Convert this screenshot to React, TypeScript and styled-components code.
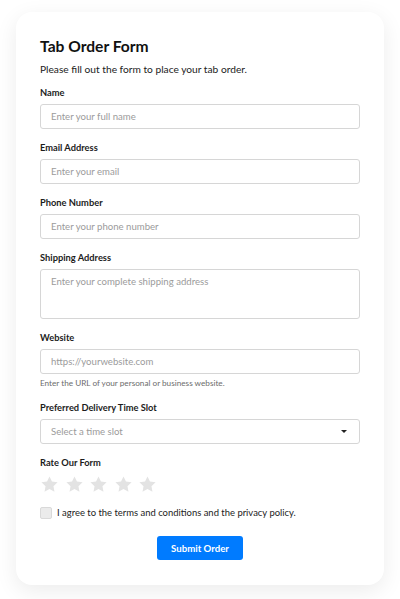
import React from 'react';
import styled, { createGlobalStyle } from 'styled-components';

const GlobalStyle = createGlobalStyle`
  * { box-sizing: border-box; }
  body {
    margin: 0;
    background: #ffffff;
    font-family: Lato, "Open Sans", sans-serif;
    color: #212529;
  }
`;

const Page = styled.div`
  padding: 12px 16px 14px;
`;

const Card = styled.form`
  display: flex;
  flex-direction: column;
  background: #ffffff;
  border-radius: 16px;
  padding: 24px 24px 25px;
  box-shadow: 0 6px 22px rgba(0, 0, 0, 0.08);
`;

const Title = styled.h1`
  margin: 0;
  font-size: 15.6px;
  line-height: 20px;
  font-weight: 700;
  color: #111111;
`;

const Subtitle = styled.p`
  margin: 5.5px 0 11.8px;
  font-size: 10.2px;
  line-height: 14px;
  color: #222222;
`;

const Field = styled.div`
  display: flex;
  flex-direction: column;
  margin-bottom: 13px;
`;

const Label = styled.label`
  font-size: 9.3px;
  line-height: 12px;
  font-weight: 700;
  color: #1c1c1c;
  margin-bottom: 5px;
`;

const inputBase = `
  width: 100%;
  border: 1px solid #d6d6d6;
  border-radius: 3px;
  background: #ffffff;
  font-family: Lato, "Open Sans", sans-serif;
  font-size: 9.6px;
  color: #333333;
  outline: none;
  &::placeholder { color: #9b9b9b; }
`;

const TextInput = styled.input`
  ${inputBase}
  height: 25px;
  padding: 0 10px;
`;

const TextArea = styled.textarea`
  ${inputBase}
  height: 50px;
  padding: 6px 10px;
  line-height: 12px;
  resize: none;
`;

const Help = styled.span`
  margin-top: 4px;
  font-size: 8.2px;
  line-height: 11px;
  color: #6c6c6c;
`;

const SelectBox = styled.div`
  ${inputBase}
  height: 25px;
  padding: 0 12px 0 10px;
  display: flex;
  align-items: center;
  justify-content: space-between;
  color: #9b9b9b;
`;

const Caret = styled.span`
  width: 0;
  height: 0;
  border-left: 3px solid transparent;
  border-right: 3px solid transparent;
  border-top: 3.5px solid #222222;
`;

const Stars = styled.div`
  display: flex;
  gap: 5.5px;
  margin-top: 1px;
`;

const Star = () => (
  <svg width="19" height="19" viewBox="0 0 24 24">
    <path
      d="M12 1.8l3.1 6.5 7.1.9-5.2 4.9 1.3 7.1L12 17.8l-6.3 3.4 1.3-7.1L1.8 9.2l7.1-.9z"
      fill="#e3e3e3"
    />
  </svg>
);

const CheckRow = styled.label`
  display: flex;
  align-items: center;
  gap: 5px;
  font-size: 9.45px;
  line-height: 12px;
  color: #222222;
`;

const Box = styled.span`
  width: 12px;
  height: 12px;
  border: 1px solid #d9d9d9;
  background: #ebebeb;
  border-radius: 2px;
`;

const Actions = styled.div`
  display: flex;
  justify-content: center;
  margin-top: 16.4px;
`;

const SubmitButton = styled.button`
  height: 24.3px;
  padding: 0 14.5px;
  border: none;
  border-radius: 3px;
  background: #007bff;
  color: #ffffff;
  font-family: Lato, "Open Sans", sans-serif;
  font-size: 9.65px;
  font-weight: 700;
`;

export default function App() {
  return (
    <Page>
      <GlobalStyle />
      <Card onSubmit={e => e.preventDefault()}>
        <Title>Tab Order Form</Title>
        <Subtitle>Please fill out the form to place your tab order.</Subtitle>

        <Field>
          <Label>Name</Label>
          <TextInput placeholder="Enter your full name" />
        </Field>
        <Field>
          <Label>Email Address</Label>
          <TextInput placeholder="Enter your email" />
        </Field>
        <Field>
          <Label>Phone Number</Label>
          <TextInput placeholder="Enter your phone number" />
        </Field>
        <Field>
          <Label>Shipping Address</Label>
          <TextArea placeholder="Enter your complete shipping address" />
        </Field>
        <Field>
          <Label>Website</Label>
          <TextInput placeholder="https://yourwebsite.com" />
          <Help>Enter the URL of your personal or business website.</Help>
        </Field>
        <Field>
          <Label>Preferred Delivery Time Slot</Label>
          <SelectBox>
            Select a time slot
            <Caret />
          </SelectBox>
        </Field>
        <Field>
          <Label>Rate Our Form</Label>
          <Stars>
            {[1, 2, 3, 4, 5].map(n => (
              <Star key={n} />
            ))}
          </Stars>
        </Field>

        <CheckRow>
          <Box />
          I agree to the terms and conditions and the privacy policy.
        </CheckRow>

        <Actions>
          <SubmitButton type="submit">Submit Order</SubmitButton>
        </Actions>
      </Card>
    </Page>
  );
}
